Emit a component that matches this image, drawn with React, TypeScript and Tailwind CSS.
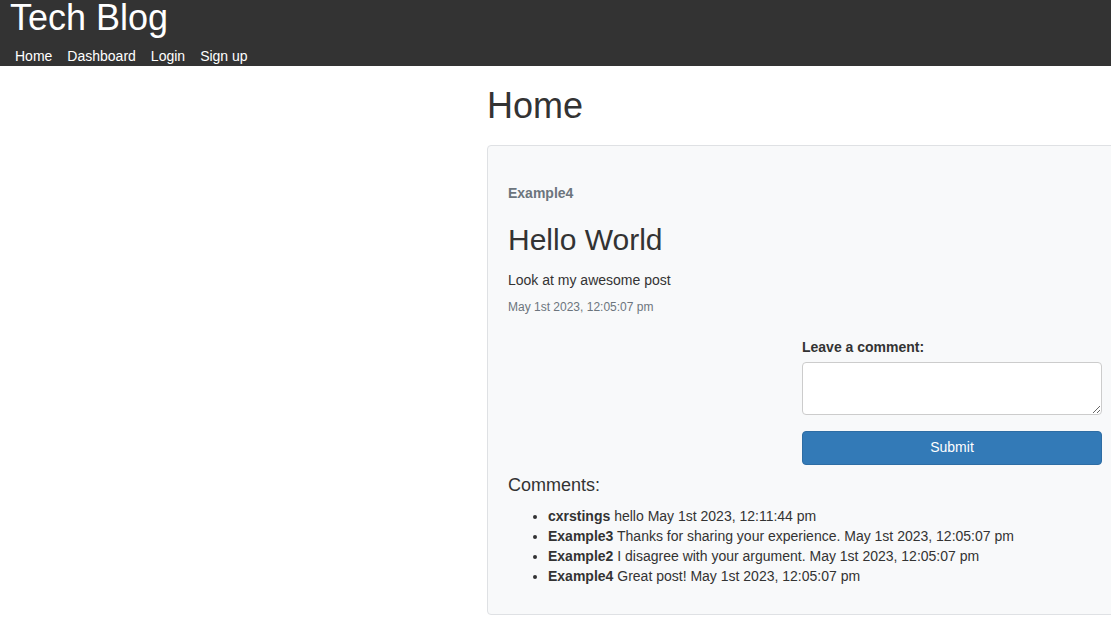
import React from "react";

const comments = [
  { user: "cxrstings", text: "hello", date: "May 1st 2023, 12:11:44 pm" },
  { user: "Example3", text: "Thanks for sharing your experience.", date: "May 1st 2023, 12:05:07 pm" },
  { user: "Example2", text: "I disagree with your argument.", date: "May 1st 2023, 12:05:07 pm" },
  { user: "Example4", text: "Great post!", date: "May 1st 2023, 12:05:07 pm" },
];

export default function App() {
  return (
    <div
      className="w-[1111px] min-h-[618px] overflow-hidden bg-white text-[#333]"
      style={{ fontFamily: '"Liberation Sans", Arial, Helvetica, sans-serif' }}
    >
      <header className="bg-[#333] h-[66px] text-white">
        <h1 className="ml-[10px] text-[36px] leading-[36px] font-normal">Tech Blog</h1>
        <nav className="mt-[10px] ml-[15px] flex gap-[15px] text-[14px] leading-[20px]">
          <a className="text-white">Home</a>
          <a className="text-white">Dashboard</a>
          <a className="text-white">Login</a>
          <a className="text-white">Sign up</a>
        </nav>
      </header>

      <main className="ml-[487px]">
        <h2 className="mt-[20px] text-[36px] leading-[39.6px] font-normal text-[#333]">Home</h2>
        <section className="mt-[19px] w-[636px] rounded-[4px] border border-[#dfe1e4] bg-[#f8f9fa] px-[20px] pt-[37px] pb-[28px]">
          <div className="text-[14px] leading-[20px] font-bold text-[#6c757d]">Example4</div>
          <h3 className="mt-[20px] text-[30px] leading-[33px] font-normal text-[#333]">Hello World</h3>
          <p className="mt-[14px] text-[14px] leading-[20px] text-[#333]">Look at my awesome post</p>
          <p className="mt-[9px] text-[12px] leading-[17px] text-[#6c757d]">May 1st 2023, 12:05:07 pm</p>

          <div className="mt-[21px] flex justify-end">
            <form className="w-[300px] flex flex-col">
              <label className="text-[14px] leading-[20px] font-bold text-[#333]">Leave a comment:</label>
              <textarea className="mt-[5px] h-[53px] w-[300px] rounded-[4px] border border-[#ccc] bg-white" />
              <button
                type="button"
                className="mt-[16px] h-[34px] w-[300px] rounded-[4px] border border-[#2e6da4] bg-[#337ab7] text-[14px] text-white"
              >
                Submit
              </button>
            </form>
          </div>

          <h4 className="mt-[10px] text-[18px] leading-[20px] font-normal text-[#333]">Comments:</h4>
          <ul className="mt-[11px] list-disc pl-[40px] text-[14px] leading-[20px] text-[#333]">
            {comments.map((c, i) => (
              <li key={i}>
                <strong className="font-bold">{c.user}</strong> {c.text} {c.date}
              </li>
            ))}
          </ul>
        </section>
      </main>
    </div>
  );
}
